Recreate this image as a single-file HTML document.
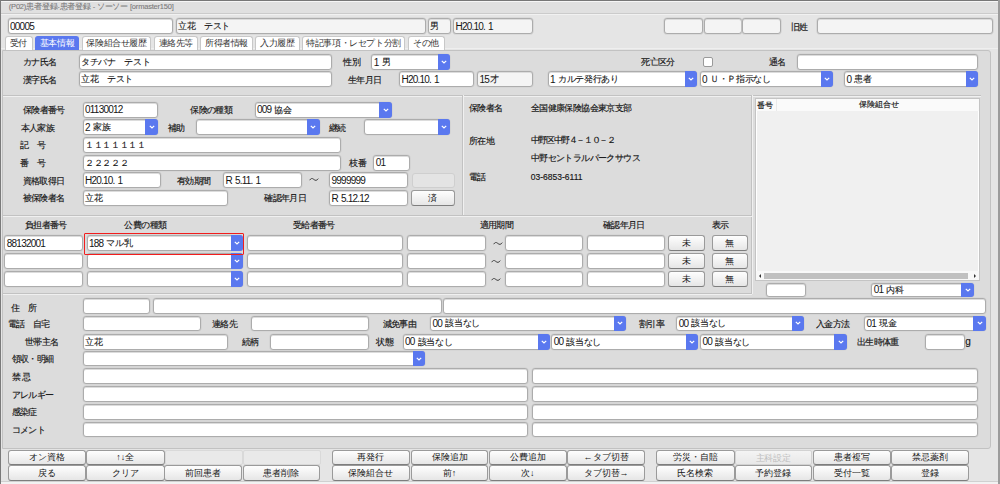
<!DOCTYPE html><html><head><meta charset="utf-8"><style>
*{box-sizing:border-box;margin:0;padding:0}
html,body{width:1000px;height:484px;overflow:hidden;background:#e5e5e5;font-family:"Liberation Sans",sans-serif;color:#222}
div{position:absolute}
.l{font-size:8.5px;letter-spacing:-0.6px;line-height:12px;white-space:nowrap;color:#151515;-webkit-text-stroke:0.15px #151515}
.i{background:#fff;border:1px solid #acacac;border-radius:3px;box-shadow:inset 0 1px 0 #dcdcdc,0 0 0 0.6px #cfcfcf;font-size:8.8px;white-space:nowrap}
.i i{font-style:normal;font-size:10px;letter-spacing:-0.8px;word-spacing:1px;-webkit-text-stroke:0;margin-right:1px;position:relative;top:0.7px}
.i span{position:absolute;left:1.6px;letter-spacing:-0.35px;color:#151515;-webkit-text-stroke:0.1px #151515;top:50%;margin-top:-6px;line-height:12px}
.s b{position:absolute;right:-1px;top:-1px;bottom:-1px;background:#5a78ef;border-radius:0 3px 3px 0;display:flex;align-items:center;justify-content:center}
.bt{background:linear-gradient(#fefefe,#e6e6e6);border:1px solid #9a9a9a;border-bottom-color:#7d7d7d;color:#151515;border-radius:3px;font-size:9px;text-align:center;white-space:nowrap}
.bt span{position:absolute;left:0;right:0;top:50%;margin-top:-6px;line-height:12px}
.tab{background:#fff;border:1px solid #c8c8c8;border-bottom:none;border-radius:3px 3px 0 0;font-size:8.5px;letter-spacing:-0.4px;text-align:center;line-height:13px;color:#333}
.pn{background:#dcdcdc}
.hl{height:0;border-top:1px solid #c2c2c2;border-bottom:1px solid #f0f0f0}
.vl{width:0;border-left:1px solid #c2c2c2;border-right:1px solid #f0f0f0}
</style></head><body><div style="left:0;top:0;width:1000px;height:484px;background:#e5e5e5"></div>
<div style="left:0;top:1px;width:1000px;height:12.8px;background:#e0e0e0;border-top:1px solid #f6f6f6;border-bottom:1.2px solid #cbcbcb"></div>
<div style="left:0;top:13.8px;width:1000px;height:1px;background:#f1f1f1"></div>
<div style="left:0;top:48.2px;width:1000px;height:1px;background:#efefef"></div>
<div class="l" style="left:8.8px;top:1.2px;color:#7a7a7a;font-size:7.5px;letter-spacing:-0.2px;-webkit-text-stroke:0.1px #7a7a7a">(P02)患者登録-患者登録 - ソーソー [ormaster150]</div>
<div class="i" style="left:7.5px;top:17.75px;width:165.75px;height:16.25px;"><span><i>00005</i></span></div>
<div class="i" style="left:175.5px;top:17.75px;width:250.25px;height:16.25px;background:#f4f4f4"><span>立花　テスト</span></div>
<div class="i" style="left:427.5px;top:17.75px;width:23.25px;height:16.25px;background:#f4f4f4"><span>男</span></div>
<div class="i" style="left:453px;top:17.75px;width:80.25px;height:16.25px;background:#f4f4f4"><span><i>H20.10. 1</i></span></div>
<div class="i" style="left:663.5px;top:17.75px;width:39.25px;height:16.25px;background:#f4f4f4"></div>
<div class="i" style="left:703.5px;top:17.75px;width:38.25px;height:16.25px;background:#f4f4f4"></div>
<div class="i" style="left:742px;top:17.75px;width:39.25px;height:16.25px;background:#f4f4f4"></div>
<div class="l" style="left:790.8px;top:20.7px;">旧姓</div>
<div class="i" style="left:816.5px;top:17.75px;width:176.25px;height:16.25px;background:#f4f4f4"></div>
<div class="tab" style="left:4.5px;top:35.5px;width:28px;height:14px;">受付</div>
<div class="tab" style="left:35px;top:35.5px;width:44px;height:14px;background:#5a78ef;color:#fff;border-color:#5a78ef">基本情報</div>
<div class="tab" style="left:82px;top:35.5px;width:69px;height:14px;">保険組合せ履歴</div>
<div class="tab" style="left:153.5px;top:35.5px;width:44.5px;height:14px;">連絡先等</div>
<div class="tab" style="left:200px;top:35.5px;width:53px;height:14px;">所得者情報</div>
<div class="tab" style="left:255px;top:35.5px;width:44.5px;height:14px;">入力履歴</div>
<div class="tab" style="left:302px;top:35.5px;width:103px;height:14px;">特記事項・レセプト分割</div>
<div class="tab" style="left:407.5px;top:35.5px;width:37px;height:14px;">その他</div>
<div class="pn" style="left:2px;top:49.5px;width:989px;height:399px;border:1px solid #c2c2c2;border-radius:0 3px 3px 0"></div>
<div class="hl" style="left:3px;top:94.5px;width:978px"></div>
<div class="vl" style="left:462px;top:95px;height:120px"></div>
<div class="vl" style="left:751px;top:95px;height:198.5px"></div>
<div class="hl" style="left:3px;top:215px;width:749px"></div>
<div class="hl" style="left:3px;top:292.5px;width:749px"></div>
<div class="l" style="left:22.8px;top:56.2px;">カナ氏名</div>
<div class="i" style="left:78.5px;top:54.25px;width:253.25px;height:15.25px;"><span>タチバナ　テスト</span></div>
<div class="l" style="left:22.8px;top:73.7px;">漢字氏名</div>
<div class="i" style="left:78.5px;top:71.25px;width:253.25px;height:15.75px;"><span>立花　テスト</span></div>
<div class="l" style="left:343.3px;top:56.2px;">性別</div>
<div class="i s" style="left:371.25px;top:54.25px;width:79px;height:15.25px;"><span><i>1</i> 男</span><b style="width:12.5px"><svg width="6" height="4" viewBox="0 0 6 4"><path d="M0.8 0.8L3 3L5.2 0.8" stroke="#fff" stroke-width="1.2" fill="none"/></svg></b></div>
<div class="l" style="left:347.8px;top:73.7px;">生年月日</div>
<div class="i" style="left:399px;top:71.25px;width:74.75px;height:15.75px;"><span><i>H20.10. 1</i></span></div>
<div class="i" style="left:477px;top:71.25px;width:55.75px;height:15.75px;background:#f4f4f4"><span><i>15</i>才</span></div>
<div class="l" style="left:641.3px;top:56.2px;">死亡区分</div>
<div style="left:703px;top:56.8px;width:10.3px;height:10.2px;background:#fff;border:1px solid #9a9a9a;border-radius:2px"></div>
<div class="i s" style="left:547.5px;top:71.25px;width:149.25px;height:15.75px;"><span><i>1</i> カルテ発行あり</span><b style="width:12px"><svg width="6" height="4" viewBox="0 0 6 4"><path d="M0.8 0.8L3 3L5.2 0.8" stroke="#fff" stroke-width="1.2" fill="none"/></svg></b></div>
<div class="i s" style="left:699.5px;top:71.25px;width:133.75px;height:15.75px;"><span><i>0</i> Ｕ・Ｐ指示なし</span><b style="width:12.5px"><svg width="6" height="4" viewBox="0 0 6 4"><path d="M0.8 0.8L3 3L5.2 0.8" stroke="#fff" stroke-width="1.2" fill="none"/></svg></b></div>
<div class="l" style="left:768.8px;top:56.2px;">通名</div>
<div class="i" style="left:797px;top:54.25px;width:181.25px;height:15.25px;"></div>
<div class="i s" style="left:844px;top:71.25px;width:133.75px;height:15.75px;"><span><i>0</i> 患者</span><b style="width:12px"><svg width="6" height="4" viewBox="0 0 6 4"><path d="M0.8 0.8L3 3L5.2 0.8" stroke="#fff" stroke-width="1.2" fill="none"/></svg></b></div>
<div class="l" style="left:22.8px;top:104.2px;">保険者番号</div>
<div class="i" style="left:82.5px;top:101.75px;width:75.25px;height:15.75px;"><span><i>01130012</i></span></div>
<div class="l" style="left:190.3px;top:104.2px;">保険の種類</div>
<div class="i s" style="left:254.5px;top:101.75px;width:137.25px;height:15.75px;"><span><i>009</i> 協会</span><b style="width:12.5px"><svg width="6" height="4" viewBox="0 0 6 4"><path d="M0.8 0.8L3 3L5.2 0.8" stroke="#fff" stroke-width="1.2" fill="none"/></svg></b></div>
<div class="l" style="left:20.55px;top:121.7px;">本人家族</div>
<div class="i s" style="left:82.5px;top:119.25px;width:75.25px;height:15.75px;"><span><i>2</i> 家族</span><b style="width:12.5px"><svg width="6" height="4" viewBox="0 0 6 4"><path d="M0.8 0.8L3 3L5.2 0.8" stroke="#fff" stroke-width="1.2" fill="none"/></svg></b></div>
<div class="l" style="left:167.8px;top:121.7px;">補助</div>
<div class="i s" style="left:196px;top:119.25px;width:123.5px;height:15.75px;"><b style="width:12.5px"><svg width="6" height="4" viewBox="0 0 6 4"><path d="M0.8 0.8L3 3L5.2 0.8" stroke="#fff" stroke-width="1.2" fill="none"/></svg></b></div>
<div class="l" style="left:328.8px;top:121.7px;">継続</div>
<div class="i s" style="left:363.5px;top:119.25px;width:86.75px;height:15.75px;"><b style="width:12.5px"><svg width="6" height="4" viewBox="0 0 6 4"><path d="M0.8 0.8L3 3L5.2 0.8" stroke="#fff" stroke-width="1.2" fill="none"/></svg></b></div>
<div class="l" style="left:19.8px;top:139.2px;">記　号</div>
<div class="i" style="left:82.5px;top:136.75px;width:258.25px;height:15.75px;"><span>１１１１１１１</span></div>
<div class="l" style="left:19.8px;top:157.2px;">番　号</div>
<div class="i" style="left:82.5px;top:154.75px;width:258.25px;height:15.75px;"><span>２２２２２</span></div>
<div class="l" style="left:349.3px;top:157.2px;">枝番</div>
<div class="i" style="left:373.25px;top:154.75px;width:36.5px;height:15.75px;"><span><i>01</i></span></div>
<div class="l" style="left:22.55px;top:174.7px;">資格取得日</div>
<div class="i" style="left:82.5px;top:172.25px;width:78.75px;height:15.75px;"><span><i>H20.10. 1</i></span></div>
<div class="l" style="left:176.8px;top:174.7px;">有効期間</div>
<div class="i" style="left:223px;top:172.25px;width:78.75px;height:15.75px;"><span><i>R 5.11. 1</i></span></div>
<svg style="position:absolute;left:308.5px;top:176.8px" width="10" height="5" viewBox="0 0 10 5"><path d="M0.7 3.2C1.8 1.2 3.3 1 4.8 2.4S7.8 3.8 9.3 1.6" stroke="#3a3a3a" stroke-width="0.95" fill="none"/></svg>
<div class="i" style="left:329px;top:172.25px;width:78.75px;height:15.75px;"><span><i>9999999</i></span></div>
<div style="left:412px;top:173px;width:43px;height:14.5px;background:#e4e4e4;border:1px solid #cfcfcf;border-radius:3px"></div>
<div class="l" style="left:22.55px;top:192.2px;">被保険者名</div>
<div class="i" style="left:82.5px;top:189.75px;width:145.25px;height:16.25px;"><span>立花</span></div>
<div class="l" style="left:264.3px;top:192.2px;">確認年月日</div>
<div class="i" style="left:329px;top:189.75px;width:78.75px;height:16.25px;"><span><i>R 5.12.12</i></span></div>
<div class="bt" style="left:410.5px;top:189.75px;width:44.25px;height:16.25px;"><span>済</span></div>
<div class="l" style="left:468.8px;top:101.7px;">保険者名</div>
<div class="l" style="left:530.8px;top:101.7px;">全国健康保険協会東京支部</div>
<div class="l" style="left:468.8px;top:134.7px;">所在地</div>
<div class="l" style="left:530.8px;top:134.2px;letter-spacing:-1.4px">中野区中野４－１０－２</div>
<div class="l" style="left:530.8px;top:151.7px;">中野セントラルパークサウス</div>
<div class="l" style="left:468.8px;top:170.7px;">電話</div>
<div class="l" style="left:530.8px;top:170.7px;letter-spacing:0">03-6853-6111</div>
<div style="left:754.5px;top:97.5px;width:225px;height:183.5px;background:#f0f0f0;border:1px solid #c4c4c4;box-shadow:inset 0 0 0 1px #fff"></div>
<div style="left:756px;top:98.5px;width:222.5px;height:12.5px;background:#fafafa"></div>
<div class="l" style="left:757.3px;top:99px;font-size:8.4px;letter-spacing:0">番号</div>
<div class="l" style="left:819.3px;top:98.3px;width:120px;text-align:center;font-size:8.4px;letter-spacing:0">保険組合せ</div>
<div style="left:776px;top:98.5px;width:1px;height:12.5px;background:#eaeaea"></div>
<div style="left:755.5px;top:271px;width:223.5px;height:9px;background:#f8f8f8"></div>
<div style="left:764px;top:273px;width:204px;height:6px;background:#c0c0c0"></div>
<div style="left:758.5px;top:274px;width:0;height:0;border-top:2px solid transparent;border-bottom:2px solid transparent;border-right:2.5px solid #333"></div>
<div style="left:974px;top:274px;width:0;height:0;border-top:2px solid transparent;border-bottom:2px solid transparent;border-left:2.5px solid #333"></div>
<div class="i" style="left:766px;top:283px;width:40.25px;height:13.5px;"></div>
<div class="i s" style="left:871.25px;top:283px;width:102.7px;height:13.5px;"><span><i>01</i> 内科</span><b style="width:12.5px"><svg width="6" height="4" viewBox="0 0 6 4"><path d="M0.8 0.8L3 3L5.2 0.8" stroke="#fff" stroke-width="1.2" fill="none"/></svg></b></div>
<div class="l" style="left:-14.25px;top:219px;width:120px;text-align:center;">負担者番号</div>
<div class="l" style="left:85.5px;top:219px;width:120px;text-align:center;">公費の種類</div>
<div class="l" style="left:253.75px;top:219px;width:120px;text-align:center;">受給者番号</div>
<div class="l" style="left:436.5px;top:219px;width:120px;text-align:center;">適用期間</div>
<div class="l" style="left:563.75px;top:219px;width:120px;text-align:center;">確認年月日</div>
<div class="l" style="left:660.5px;top:219px;width:120px;text-align:center;">表示</div>
<div class="i" style="left:4.25px;top:235px;width:79px;height:16.25px;"><span><i>88132001</i></span></div>
<div class="i s" style="left:86.5px;top:235px;width:156.75px;height:16.25px;"><span><i>188</i> マル乳</span><b style="width:12.5px"><svg width="6" height="4" viewBox="0 0 6 4"><path d="M0.8 0.8L3 3L5.2 0.8" stroke="#fff" stroke-width="1.2" fill="none"/></svg></b></div>
<div class="i" style="left:246.5px;top:235px;width:156.75px;height:16.25px;"></div>
<div class="i" style="left:407px;top:235px;width:78.75px;height:16.25px;"></div>
<svg style="position:absolute;left:492.5px;top:241.25px" width="10" height="5" viewBox="0 0 10 5"><path d="M0.7 3.2C1.8 1.2 3.3 1 4.8 2.4S7.8 3.8 9.3 1.6" stroke="#3a3a3a" stroke-width="0.95" fill="none"/></svg>
<div class="i" style="left:504.5px;top:235px;width:78.75px;height:16.25px;"></div>
<div class="i" style="left:586.5px;top:235px;width:78.75px;height:16.25px;"></div>
<div class="bt" style="left:668.25px;top:235px;width:36.75px;height:16.25px;"><span>未</span></div>
<div class="bt" style="left:712px;top:235px;width:35.5px;height:16.25px;"><span>無</span></div>
<div class="i" style="left:4.25px;top:253px;width:79px;height:15.75px;"></div>
<div class="i s" style="left:86.5px;top:253px;width:156.75px;height:15.75px;"><b style="width:12.5px"><svg width="6" height="4" viewBox="0 0 6 4"><path d="M0.8 0.8L3 3L5.2 0.8" stroke="#fff" stroke-width="1.2" fill="none"/></svg></b></div>
<div class="i" style="left:246.5px;top:253px;width:156.75px;height:15.75px;"></div>
<div class="i" style="left:407px;top:253px;width:78.75px;height:15.75px;"></div>
<svg style="position:absolute;left:490.7px;top:259px" width="10" height="5" viewBox="0 0 10 5"><path d="M0.7 3.2C1.8 1.2 3.3 1 4.8 2.4S7.8 3.8 9.3 1.6" stroke="#3a3a3a" stroke-width="0.95" fill="none"/></svg>
<div class="i" style="left:504.5px;top:253px;width:78.75px;height:15.75px;"></div>
<div class="i" style="left:586.5px;top:253px;width:78.75px;height:15.75px;"></div>
<div class="bt" style="left:668.25px;top:253px;width:36.75px;height:15.75px;"><span>未</span></div>
<div class="bt" style="left:712px;top:253px;width:35.5px;height:15.75px;"><span>無</span></div>
<div class="i" style="left:4.25px;top:270.5px;width:79px;height:16.25px;"></div>
<div class="i s" style="left:86.5px;top:270.5px;width:156.75px;height:16.25px;"><b style="width:12.5px"><svg width="6" height="4" viewBox="0 0 6 4"><path d="M0.8 0.8L3 3L5.2 0.8" stroke="#fff" stroke-width="1.2" fill="none"/></svg></b></div>
<div class="i" style="left:246.5px;top:270.5px;width:156.75px;height:16.25px;"></div>
<div class="i" style="left:407px;top:270.5px;width:78.75px;height:16.25px;"></div>
<svg style="position:absolute;left:490.7px;top:276.75px" width="10" height="5" viewBox="0 0 10 5"><path d="M0.7 3.2C1.8 1.2 3.3 1 4.8 2.4S7.8 3.8 9.3 1.6" stroke="#3a3a3a" stroke-width="0.95" fill="none"/></svg>
<div class="i" style="left:504.5px;top:270.5px;width:78.75px;height:16.25px;"></div>
<div class="i" style="left:586.5px;top:270.5px;width:78.75px;height:16.25px;"></div>
<div class="bt" style="left:668.25px;top:270.5px;width:36.75px;height:16.25px;"><span>未</span></div>
<div class="bt" style="left:712px;top:270.5px;width:35.5px;height:16.25px;"><span>無</span></div>
<div style="left:84px;top:232.5px;width:159.5px;height:22px;border:1.5px solid #f21d1d;border-radius:1px"></div>
<div class="l" style="left:11.3px;top:301.7px;">住　所</div>
<div class="i" style="left:82.5px;top:298px;width:67.25px;height:15.75px;"></div>
<div class="i" style="left:152.5px;top:298px;width:289.5px;height:15.75px;"></div>
<div class="i" style="left:442.5px;top:298px;width:543.25px;height:15.75px;"></div>
<div class="l" style="left:7.8px;top:317.95px;">電話　自宅</div>
<div class="i" style="left:82.5px;top:315.5px;width:118.25px;height:15.75px;"></div>
<div class="l" style="left:211.8px;top:317.95px;">連絡先</div>
<div class="i" style="left:250.75px;top:315.5px;width:118px;height:15.75px;"></div>
<div class="l" style="left:382.55px;top:317.95px;">減免事由</div>
<div class="i s" style="left:430px;top:315.5px;width:195.75px;height:15.75px;"><span><i>00</i> 該当なし</span><b style="width:11.5px"><svg width="6" height="4" viewBox="0 0 6 4"><path d="M0.8 0.8L3 3L5.2 0.8" stroke="#fff" stroke-width="1.2" fill="none"/></svg></b></div>
<div class="l" style="left:638.8px;top:317.95px;">割引率</div>
<div class="i s" style="left:676.25px;top:315.5px;width:127.5px;height:15.75px;"><span><i>00</i> 該当なし</span><b style="width:12px"><svg width="6" height="4" viewBox="0 0 6 4"><path d="M0.8 0.8L3 3L5.2 0.8" stroke="#fff" stroke-width="1.2" fill="none"/></svg></b></div>
<div class="l" style="left:815.8px;top:317.95px;">入金方法</div>
<div class="i s" style="left:864px;top:315.5px;width:121.75px;height:15.75px;"><span><i>01</i> 現金</span><b style="width:12.5px"><svg width="6" height="4" viewBox="0 0 6 4"><path d="M0.8 0.8L3 3L5.2 0.8" stroke="#fff" stroke-width="1.2" fill="none"/></svg></b></div>
<div class="l" style="left:24.8px;top:335.95px;">世帯主名</div>
<div class="i" style="left:82.5px;top:333.5px;width:145.25px;height:16.25px;"><span>立花</span></div>
<div class="l" style="left:241.8px;top:335.95px;">続柄</div>
<div class="i" style="left:270px;top:333.5px;width:98.75px;height:16.25px;"></div>
<div class="l" style="left:376.3px;top:335.95px;">状態</div>
<div class="i s" style="left:402.5px;top:333.5px;width:147.75px;height:16.25px;"><span><i>00</i> 該当なし</span><b style="width:12.5px"><svg width="6" height="4" viewBox="0 0 6 4"><path d="M0.8 0.8L3 3L5.2 0.8" stroke="#fff" stroke-width="1.2" fill="none"/></svg></b></div>
<div class="i s" style="left:551.25px;top:333.5px;width:147px;height:16.25px;"><span><i>00</i> 該当なし</span><b style="width:12.5px"><svg width="6" height="4" viewBox="0 0 6 4"><path d="M0.8 0.8L3 3L5.2 0.8" stroke="#fff" stroke-width="1.2" fill="none"/></svg></b></div>
<div class="i s" style="left:700px;top:333.5px;width:147px;height:16.25px;"><span><i>00</i> 該当なし</span><b style="width:13px"><svg width="6" height="4" viewBox="0 0 6 4"><path d="M0.8 0.8L3 3L5.2 0.8" stroke="#fff" stroke-width="1.2" fill="none"/></svg></b></div>
<div class="l" style="left:856.8px;top:335.95px;">出生時体重</div>
<div class="i" style="left:924.5px;top:333.5px;width:40px;height:16.25px;"></div>
<div class="l" style="left:965.3px;top:335.95px;font-size:10px">g</div>
<div class="l" style="left:11.55px;top:352.95px;">領収・明細</div>
<div class="i s" style="left:82.5px;top:351px;width:342.75px;height:15.25px;"><b style="width:12.5px"><svg width="6" height="4" viewBox="0 0 6 4"><path d="M0.8 0.8L3 3L5.2 0.8" stroke="#fff" stroke-width="1.2" fill="none"/></svg></b></div>
<div class="l" style="left:11.55px;top:370.95px;">禁 忌</div>
<div class="i" style="left:82.5px;top:368.25px;width:445.75px;height:15.75px;"></div>
<div class="i" style="left:532px;top:368.25px;width:446.25px;height:15.75px;"></div>
<div class="l" style="left:11.55px;top:388.95px;">アレルギー</div>
<div class="i" style="left:82.5px;top:386.25px;width:445.75px;height:15.75px;"></div>
<div class="i" style="left:532px;top:386.25px;width:446.25px;height:15.75px;"></div>
<div class="l" style="left:11.55px;top:406.45px;">感染症</div>
<div class="i" style="left:82.5px;top:403.75px;width:445.75px;height:15.75px;"></div>
<div class="i" style="left:532px;top:403.75px;width:446.25px;height:15.75px;"></div>
<div class="l" style="left:11.55px;top:424.07px;">コメント</div>
<div class="i" style="left:82.5px;top:421.5px;width:445.75px;height:15.5px;"></div>
<div class="i" style="left:532px;top:421.5px;width:446.25px;height:15.5px;"></div>
<div class="bt" style="left:7.5px;top:449.5px;width:78.25px;height:15.75px;"><span>オン資格</span></div>
<div class="bt" style="left:7.5px;top:465px;width:78.25px;height:15.75px;"><span>戻る</span></div>
<div class="bt" style="left:86px;top:449.5px;width:78.5px;height:15.75px;"><span>↑↓全</span></div>
<div class="bt" style="left:86px;top:465px;width:78.5px;height:15.75px;"><span>クリア</span></div>
<div class="bt" style="left:164.25px;top:465px;width:78px;height:15.75px;"><span>前回患者</span></div>
<div class="bt" style="left:242.5px;top:465px;width:77.75px;height:15.75px;"><span>患者削除</span></div>
<div class="bt" style="left:331.5px;top:449.5px;width:78.5px;height:15.75px;"><span>再発行</span></div>
<div class="bt" style="left:331.5px;top:465px;width:78.5px;height:15.75px;"><span>保険組合せ</span></div>
<div class="bt" style="left:410.75px;top:449.5px;width:77.5px;height:15.75px;"><span>保険追加</span></div>
<div class="bt" style="left:410.75px;top:465px;width:77.5px;height:15.75px;"><span>前↑</span></div>
<div class="bt" style="left:489px;top:449.5px;width:77.5px;height:15.75px;"><span>公費追加</span></div>
<div class="bt" style="left:489px;top:465px;width:77.5px;height:15.75px;"><span>次↓</span></div>
<div class="bt" style="left:567px;top:449.5px;width:78px;height:15.75px;"><span>←タブ切替</span></div>
<div class="bt" style="left:567px;top:465px;width:78px;height:15.75px;"><span>タブ切替→</span></div>
<div class="bt" style="left:655.75px;top:449.5px;width:78.75px;height:15.75px;"><span>労災・自賠</span></div>
<div class="bt" style="left:655.75px;top:465px;width:78.75px;height:15.75px;"><span>氏名検索</span></div>
<div class="bt" style="left:734.5px;top:465px;width:77.5px;height:15.75px;"><span>予約登録</span></div>
<div class="bt" style="left:812.5px;top:449.5px;width:78.25px;height:15.75px;"><span>患者複写</span></div>
<div class="bt" style="left:812.5px;top:465px;width:78.25px;height:15.75px;"><span>受付一覧</span></div>
<div class="bt" style="left:890.75px;top:449.5px;width:78.25px;height:15.75px;"><span>禁忌薬剤</span></div>
<div class="bt" style="left:890.75px;top:465px;width:78.25px;height:15.75px;"><span>登録</span></div>
<div style="left:734.5px;top:449.5px;width:77.5px;height:15.25px;background:linear-gradient(#f4f4f4,#e8e8e8);border:1px solid #d2d2d2;border-radius:2px"></div>
<div class="l" style="left:735px;top:451.5px;width:76px;text-align:center;font-size:8.5px;letter-spacing:-0.4px;color:#bdbdbd;-webkit-text-stroke:0">主科設定</div>
<div style="left:164.5px;top:450.25px;width:78px;height:14.5px;background:#e9e9e9;border:1px solid #d9d9d9;border-radius:2px"></div>
<div style="left:242.5px;top:450.25px;width:78px;height:14.5px;background:#e9e9e9;border:1px solid #d9d9d9;border-radius:2px"></div>
<div style="left:0;top:481px;width:1000px;height:3px;background:#f2f2f2;border-top:1px solid #d0d0d0"></div>
<div style="left:0;top:0;width:1000px;height:1px;background:#777"></div>
<div style="left:0;top:0;width:1.2px;height:484px;background:#7a7a7a"></div>
<div style="left:998.3px;top:0;width:1.7px;height:484px;background:#9c9c9c"></div></body></html>
